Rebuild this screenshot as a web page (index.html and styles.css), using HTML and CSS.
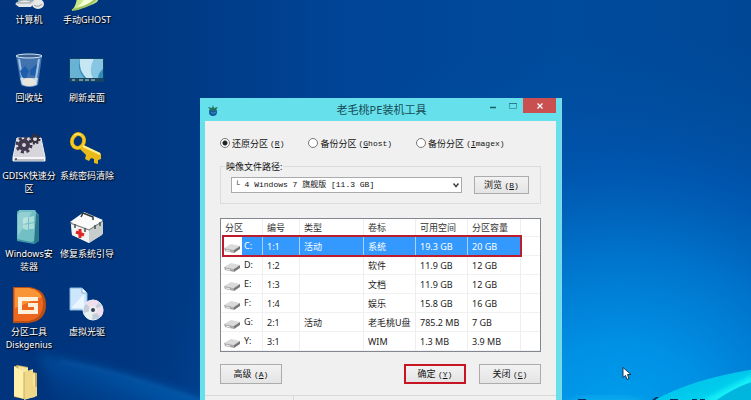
FILE: index.html
```html
<!DOCTYPE html>
<html lang="zh-CN">
<head>
<meta charset="utf-8">
<meta name="viewport" content="width=device-width, initial-scale=1">
<title>老毛桃PE装机工具</title>
<link rel="stylesheet" href="styles.css">
</head>
<body>
<main class="desktop">
  <svg class="wallpaper" viewBox="0 0 751 400" preserveAspectRatio="none" aria-hidden="true">
    <defs>
      <linearGradient id="sky" x1="0" y1="0" x2="1" y2="0">
        <stop offset="0" stop-color="#00347c"/><stop offset=".17" stop-color="#00367f"/><stop offset=".45" stop-color="#004496"/><stop offset=".75" stop-color="#004b9d"/><stop offset="1" stop-color="#004896"/>
      </linearGradient>
      <radialGradient id="glow" gradientUnits="userSpaceOnUse" cx="0" cy="0" r="1" gradientTransform="translate(620 420) scale(460 390)">
        <stop offset="0" stop-color="#00a0ee"/><stop offset=".2" stop-color="#0090e4"/><stop offset=".42" stop-color="#0074cc"/><stop offset=".65" stop-color="#0058b2" stop-opacity=".8"/><stop offset="1" stop-color="#004c9e" stop-opacity="0"/>
      </radialGradient>
      <linearGradient id="beam" gradientUnits="userSpaceOnUse" x1="120" y1="372" x2="100" y2="418">
        <stop offset="0" stop-color="#0868be" stop-opacity=".6"/><stop offset="1" stop-color="#0050a4" stop-opacity=".1"/>
      </linearGradient>
      <linearGradient id="wave" x1="0" y1="0" x2="1" y2="1">
        <stop offset="0" stop-color="#10b8ea"/><stop offset=".5" stop-color="#00c8ec"/><stop offset="1" stop-color="#00dcf0"/>
      </linearGradient>
      <filter id="soft"><feGaussianBlur stdDeviation="2"/></filter>
      <filter id="haze"><feGaussianBlur stdDeviation="5"/></filter>
    </defs>
    <rect width="751" height="400" fill="url(#sky)"/>
    <rect width="751" height="400" fill="url(#glow)"/>
    <path d="M38 354Q120 368 210 402V420H60Q50 380 38 354Z" fill="url(#beam)" filter="url(#haze)"/>
    <path d="M60 361Q125 374 202 401" stroke="#2786d2" stroke-width="1" fill="none" opacity=".6" filter="url(#soft)"/>
    <ellipse cx="605" cy="405" rx="40" ry="8" fill="#14b6ee" opacity=".7" filter="url(#haze)"/>
    <path d="M651 402Q690 379 755 369V402Z" fill="url(#wave)"/>
    <path d="M700 402Q720 391 755 374V384Q730 394 716 402Z" fill="#13eef8" filter="url(#soft)"/>
    <path d="M714 402Q733 388 755 381V402Z" fill="#00b6df"/>
    <path d="M578 400v-1h8v1zM652 400l4-3h3l-4 3zM670 400v-1h8v1zM692 400v-1h5v1zM700 400v-1h5v1z" fill="#08305e"/>
  </svg>

  <ul class="shortcuts">
    <li><svg viewBox="0 0 36 36" aria-hidden="true"><path d="M7 7h20v19H7z" fill="#8aa"/><ellipse cx="15" cy="28" rx="10" ry="3" fill="#aab4bb"/><path d="M4 29q11-7 18 0l-2 3H8z" fill="#e3e6e8"/><path d="M6 28h14" stroke="#999"/><ellipse cx="27" cy="29" rx="6" ry="5" fill="#e8e8e8"/><path d="M23 30q4 3 8-1" stroke="#999" fill="none"/></svg><span>计算机</span></li>
    <li><svg viewBox="0 0 36 36" aria-hidden="true"><path d="M3 35Q9 29 8 15L26 8Q34 18 28 27 21 32 3 35Z" fill="#c9e788"/><path d="M8 32Q19 24 19 10l8 3q2 12-6 16z" fill="#f5ffd8"/><path d="M3 35q15-2 24-11" stroke="#9bc25c" stroke-width="2" fill="none"/></svg><span>手动GHOST</span></li>
    <li><svg viewBox="0 0 36 36" aria-hidden="true"><path d="M5 3h26l-4 29q-9 4-17 0z" fill="#5c8fc4" opacity=".7"/><path d="M9 25h18l-1 7q-7 3-15 0z" fill="#bccbd6"/><path d="M12 27q6-4 12 0l1 4q-7 4-13 0z" fill="#e8e5dd"/><path d="M8 6l4 25M28 6l-4 25" stroke="#d7edff" stroke-width="2" opacity=".65"/><path d="M9 18l5-5 4 5-3 7-4-1zM19 17l7-6-2 12-5-1z" fill="#1e5dac"/><ellipse cx="18" cy="3" rx="13" ry="2" fill="#385f90" stroke="#d6e7f3"/></svg><span>回收站</span></li>
    <li><svg viewBox="0 0 36 36" aria-hidden="true"><path d="M0 5h35v24H0z" fill="#124164"/><path d="M1 6h33v20H1z" fill="#328bbd"/><path d="M1 6h10q-4 10 5 20H1z" fill="#68b2d4"/><path d="M11 6h14Q20 17 28 26h-10Q9 17 11 6Z" fill="#c6e6f4"/><path d="M25 6h9v10q-5 4-5 10h-5q-5-10 1-20Z" fill="#86c6e3"/><path d="M1 25h33v3H1z" fill="#18465e"/><path d="M3 27h3M10 27h4M16 27h4M22 27h4" stroke="#bddde9"/></svg><span>刷新桌面</span></li>
    <li><svg viewBox="0 0 36 36" aria-hidden="true"><path d="M6 7h24l4 19v4H2v-4z" fill="#d7d5dc" stroke="#eee"/><path d="M2 26h32v4H2z" fill="#f6f6f7"/><path d="M3 29h30" stroke="#888795"/><circle cx="5" cy="28" r="1" fill="#444"/><circle cx="13" cy="14" r="4" fill="none" stroke="#42394f" stroke-width="4"/><circle cx="13" cy="14" r="7" fill="none" stroke="#42394f" stroke-width="3" stroke-dasharray="3 2.500"/><circle cx="24" cy="8" r="3" fill="none" stroke="#34303c" stroke-width="2"/><circle cx="24" cy="8" r="4.500" fill="none" stroke="#34303c" stroke-width="2" stroke-dasharray="2 1.500"/></svg><span>GDISK快速分区</span></li>
    <li><svg viewBox="0 0 36 36" aria-hidden="true"><ellipse cx="9" cy="10" rx="6" ry="7" transform="rotate(18 9 10)" fill="none" stroke="#b98300" stroke-width="4"/><ellipse cx="9" cy="10" rx="6" ry="7" transform="rotate(18 9 10)" fill="none" stroke="#f2cb29" stroke-width="3"/><path d="M14 14l18 9v5l-3 1v4l-4-1v-4l-3-1-2 3-4-2 1-4-6-6z" fill="#e9b91a"/><path d="M14 15l17 8" stroke="#fff18a" stroke-width="2"/><path d="M5 4q3-3 7 0" stroke="#fff69b" fill="none" stroke-width="1"/></svg><span>系统密码清除</span></li>
    <li><svg viewBox="0 0 36 36" aria-hidden="true"><path d="M6 2h18l4 4v26l-5 3L6 32z" fill="#3c98a5"/><path d="M8 1h16l2 4v26l-6 2L6 30V5z" fill="#72c0c5"/><path d="M9 3h12L7 27V6z" fill="#b4dfdd" opacity=".5"/><path d="M25 4l3 3v25l-5 2z" fill="#287887"/><path d="M12 9l5-1v6l-5 1zM18 8l5-1v6l-5 1zM12 16l5-1v6l-5-1zM18 15l5-1v6h-5z" fill="#d5f1e9" opacity=".6"/></svg><span>Windows安装器</span></li>
    <li><svg viewBox="0 0 36 36" aria-hidden="true"><path d="M2 14l31-3v15L20 34 3 26z" fill="#d7dbd9"/><path d="M1 13L15 3l19 8-14 9z" fill="#fafafa"/><path d="M2 15l18 6v13L3 26z" fill="#f2f3f2"/><path d="M20 21l14-9v13l-14 9z" fill="#c7cecc"/><path d="M1 14l19 7 14-9" stroke="#747b7a" fill="none"/><path d="M12 8l2-4 10 4v3" stroke="#303333" stroke-width="1.500" fill="none"/><path d="M6 15v4M16 19v4M26 16v4M31 13v4" stroke="#49504e" stroke-width="1.500"/><path d="M11 20v9M7 23l8 3" stroke="#df2522" stroke-width="3"/></svg><span>修复系统引导</span></li>
    <li><svg viewBox="0 0 36 36" aria-hidden="true"><path d="M2 0h16q17 2 17 18T17 36H2z" fill="#bd4f15"/><path d="M3 1h15q15 3 14 17T17 34H3z" fill="#ed681e"/><path d="M4 1h14q10 2 13 9L4 21z" fill="#ffad43" opacity=".65"/><path d="M27 12H9v13h16v-7h-8" fill="none" stroke="#fff1dc" stroke-width="4"/></svg><span>分区工具<br>Diskgenius</span></li>
    <li><svg viewBox="0 0 36 36" aria-hidden="true"><path d="M1 1h12l5 5v17H1z" fill="#cee6fb" stroke="#87b6df"/><path d="M13 1v5h5" fill="#fff" stroke="#82add3"/><path d="M3 20L15 7v14H3z" fill="#e9f5ff"/><circle cx="24" cy="23" r="10" fill="#c7ccda" stroke="#edf1f7"/><path d="M24 23l-8-7q8-6 14-1zM24 23l8 7q4-5 1-11z" fill="#efdfee"/><path d="M24 23l-9 3q2 7 8 7z" fill="#e5f4f3"/><circle cx="24" cy="23" r="3" fill="#33415c" stroke="#eee" stroke-width="2"/></svg><span>虚拟光驱</span></li>
    <li><svg viewBox="0 0 36 36" role="img" aria-label="文件夹"><path d="M3 2l3-2 11 2v4l9 2v22l-12 4-11-2z" fill="#c9ab5c"/><path d="M7 1l10 2v7l7-2v24l-10 2z" fill="#f5e7a2"/><path d="M3 1l10 6v27L3 31z" fill="#fff0aa"/><path d="M13 7l9-3v17l4 1v9l-13 4z" fill="#efd989"/><path d="M13 7v27" stroke="#c7ad60"/></svg></li>
  </ul>

  <section class="window" aria-labelledby="window-title">
    <header class="titlebar">
      <svg class="app-icon" viewBox="0 0 12 12" aria-hidden="true"><circle cx="6" cy="8" r="4" fill="#135a9d"/><path d="M1 3l4 1 1-3 1 3 4-1-3 4H4z" fill="#25735f"/><path d="M4 8q2 3 5 0" stroke="#3d9ac3" fill="none"/></svg>
      <h1 id="window-title">老毛桃PE装机工具</h1>
      <div class="caption-buttons">
        <button type="button" class="caption" aria-label="最小化"><svg viewBox="0 0 10 10"><path d="M2 6.500h6" stroke="#17616b" stroke-width="1.500"/></svg></button>
        <button type="button" class="caption" aria-label="最大化"><svg viewBox="0 0 10 10"><path d="M1.500 2.500h7v5h-7z" fill="none" stroke="#40a1ad"/><path d="M1 2.500h8" stroke="#287f8b"/></svg></button>
        <button type="button" class="caption caption-close" aria-label="关闭窗口"><svg viewBox="0 0 10 10"><path d="M2.500 2.500l5 5m0-5l-5 5" stroke="#fff" stroke-width="1.300"/></svg></button>
      </div>
    </header>
    <form class="client">
      <div class="modes">
        <label><input type="radio" name="mode" checked>还原分区 <span class="latin">(<u>R</u>)</span></label>
        <label><input type="radio" name="mode">备份分区 <span class="latin">(<u>G</u>host)</span></label>
        <label><input type="radio" name="mode">备份分区 <span class="latin">(<u>I</u>magex)</span></label>
      </div>
      <fieldset class="image-path">
        <legend><label for="image">映像文件路径:</label></legend>
        <div class="path-row">
          <div class="combo">
            <select id="image"><option>└ 4 Windows 7 旗舰版 [11.3 GB]</option></select>
            <svg viewBox="0 0 8 8" aria-hidden="true"><path d="M1.500 2.500L4 5.500l2.500-3" fill="none" stroke="#444" stroke-width="1.500"/></svg>
          </div>
          <button type="button" class="button browse">浏览 <span class="latin">(<u>B</u>)</span></button>
        </div>
      </fieldset>
      <div class="list">
        <table>
          <colgroup><col class="c-drive"><col class="c-number"><col class="c-type"><col class="c-label"><col class="c-free"><col class="c-size"><col></colgroup>
          <thead><tr><th>分区</th><th>编号</th><th>类型</th><th>卷标</th><th>可用空间</th><th>分区容量</th><th></th></tr></thead>
          <tbody>
            <tr class="selected"><td><div class="drive"><svg class="disk" viewBox="0 0 16 10"><use href="#disk"/></svg>C:</div></td><td>1:1</td><td>活动</td><td>系统</td><td>19.3 GB</td><td>20 GB</td><td></td></tr>
            <tr><td><div class="drive"><svg class="disk" viewBox="0 0 16 10"><use href="#disk"/></svg>D:</div></td><td>1:2</td><td></td><td>软件</td><td>11.9 GB</td><td>12 GB</td><td></td></tr>
            <tr><td><div class="drive"><svg class="disk" viewBox="0 0 16 10"><use href="#disk"/></svg>E:</div></td><td>1:3</td><td></td><td>文档</td><td>11.9 GB</td><td>12 GB</td><td></td></tr>
            <tr><td><div class="drive"><svg class="disk" viewBox="0 0 16 10"><use href="#disk"/></svg>F:</div></td><td>1:4</td><td></td><td>娱乐</td><td>15.8 GB</td><td>16 GB</td><td></td></tr>
            <tr><td><div class="drive"><svg class="disk" viewBox="0 0 16 10"><use href="#disk"/></svg>G:</div></td><td>2:1</td><td>活动</td><td>老毛桃U盘</td><td>785.2 MB</td><td>7 GB</td><td></td></tr>
            <tr><td><div class="drive"><svg class="disk" viewBox="0 0 16 10"><use href="#disk"/></svg>Y:</div></td><td>3:1</td><td></td><td>WIM</td><td>1.3 MB</td><td>3.9 MB</td><td></td></tr>
          </tbody>
        </table>
        <div class="row-marker"></div>
      </div>
      <div class="actions">
        <button type="button" class="button advanced">高级 <span class="latin">(<u>A</u>)</span></button>
        <button type="button" class="button confirm">确定 <span class="latin">(<u>Y</u>)</span></button>
        <button type="button" class="button">关闭 <span class="latin">(<u>C</u>)</span></button>
      </div>
      <footer class="statusbar"><span></span><span></span></footer>
    </form>
  </section>

  <svg class="pointer" viewBox="0 0 10 14" aria-hidden="true"><path d="M1 1v10l2.500-2 1.500 4 2-1-1.500-4H9z" fill="#fff" stroke="#10243c" stroke-width=".9"/></svg>
</main>
<svg class="symbols" aria-hidden="true">
  <symbol id="disk" viewBox="0 0 16 10">
    <path class="disk-top" d="M0 5L7 1l9 2-6 4z"/><path class="disk-front" d="M0 5l10 2v3L1 8z"/><path class="disk-side" d="M10 7l6-4v3l-6 4z"/><path d="M2 7l4 1" stroke="#fff" stroke-width=".8"/>
  </symbol>
</svg>
</body>
</html>
```
FILE: styles.css
```css
* { box-sizing: border-box; }

body {
  margin: 0;
  overflow: hidden;
  background: #003a84;
  color: #222;
  font: 9px/13px "Noto Sans", "Noto Sans CJK SC", sans-serif;
}

button, select { font: inherit; color: inherit; }
u { text-underline-offset: 1px; }

.desktop {
  position: relative;
  height: 100vh;
  overflow: hidden;
}

.wallpaper {
  position: absolute;
  inset: 0;
  width: 100%;
  height: 100%;
}

/* Desktop shortcuts */
.shortcuts {
  position: absolute;
  top: -25px;
  left: 0;
  display: grid;
  grid-template-columns: 58px 58px;
  grid-auto-rows: 78px;
  margin: 0;
  padding: 0;
  list-style: none;
  color: #fff;
  text-align: center;
  text-shadow: 1px 1px 1px #000, 0 0 2px #001638;
}
.shortcuts li {
  display: flex;
  flex-direction: column;
  align-items: center;
  gap: 2px;
}
.shortcuts svg { width: 36px; height: 36px; flex: none; }
.shortcuts span { max-width: 56px; word-break: break-all; }

/* Window frame */
.window {
  position: absolute;
  top: 98px;
  left: 200px;
  width: 362px;
  padding: 0 5px 5px;
  background: #66e1ec;
  border-right: 1px solid #8cd5e4;
}
.titlebar {
  display: grid;
  grid-template-columns: 1fr auto 1fr;
  align-items: center;
  height: 23px;
  padding-left: 2px;
}
.titlebar h1 {
  margin: 0;
  color: #174b55;
  font-size: 11px;
  font-weight: 400;
  line-height: 20px;
}
.app-icon { width: 12px; height: 12px; }
.caption-buttons {
  display: flex;
  align-self: start;
  justify-content: flex-end;
}
.caption {
  width: 20px;
  height: 15px;
  padding: 0;
  border: 0;
  background: none;
  display: flex;
  align-items: center;
  justify-content: center;
}
.caption svg { width: 10px; height: 10px; }
.caption-close { width: 33px; background: #c94f50; }

.client {
  display: flex;
  flex-direction: column;
  padding: 15px 15px 0;
  background: #f0f0f0;
}

/* Restore and backup modes */
.modes { display: flex; gap: 24px; height: 14px; }
.modes label { display: flex; align-items: center; gap: 2px; color: #111; }
.modes input {
  appearance: none;
  width: 10px;
  height: 10px;
  margin: 0;
  border: 1px solid #777;
  border-radius: 50%;
  background: #fff;
}
.modes input:checked { background: radial-gradient(circle, #222 0 2px, #fff 3px); }
.latin { font-family: "Liberation Mono", monospace; font-size: 8px; }

/* Image path */
.image-path {
  min-width: 0;
  margin: 10px 0 0;
  padding: 3px 11px 9px 10px;
  border: 1px solid #dcdcdc;
}
.image-path legend { margin-left: -6px; padding: 0 1px; color: #111; }
.path-row { display: flex; align-items: center; gap: 12px; }
.combo { position: relative; flex: 1; display: flex; }
.combo select {
  appearance: none;
  width: 100%;
  height: 16px;
  padding: 0 14px 0 3px;
  border: 1px solid #aaa;
  border-radius: 0;
  background: #fff;
  color: #111;
  font: 8px/14px "Liberation Mono", "Noto Sans CJK SC", monospace;
}
.combo svg {
  position: absolute;
  top: 4px;
  right: 2px;
  width: 8px;
  height: 8px;
  pointer-events: none;
}

.button {
  width: 62px;
  height: 20px;
  padding: 0;
  border: 1px solid #acacac;
  border-radius: 0;
  background: linear-gradient(#f2f2f2, #e4e4e4);
  color: #111;
  line-height: 16px;
}
.browse { width: 55px; height: 18px; }

/* Partition list */
.list {
  position: relative;
  margin-top: 14px;
  border: 1px solid #828790;
  background: #fff;
}
table { width: 100%; table-layout: fixed; border-collapse: separate; border-spacing: 0; }
.c-drive { width: 42px; }
.c-number { width: 37px; }
.c-type { width: 64px; }
.c-label { width: 52px; }
.c-free { width: 52px; }
.c-size { width: 53px; }
th, td {
  height: 19px;
  padding: 0 0 0 4px;
  border-right: 1px solid #eee;
  border-bottom: 1px solid #f1f1f1;
  font-weight: 400;
  text-align: left;
  white-space: nowrap;
}
th { height: 18px; color: #333; }
th:last-child, td:last-child { border-right: 0; }
td:first-child { padding-left: 3px; }
.drive { display: flex; gap: 4px; }
.disk { width: 16px; height: 10px; margin-top: 4px; }
.disk-top { fill: #dadada; }
.disk-front { fill: #aaa; }
.disk-side { fill: #777; }
.selected td { background: #3399ff; color: #fff; border-right-color: #a8d2fc; }
.selected td:first-child { background: linear-gradient(90deg, #fff 21px, #3399ff 21px); }
.selected td:last-child { background: #fff; }
.selected .disk-top { fill: #79b6ec; }
.selected .disk-front { fill: #4c88c2; }
.selected .disk-side { fill: #315f92; }
.row-marker {
  position: absolute;
  top: 16px;
  left: 1px;
  right: 18px;
  height: 22px;
  border: 2px solid #bc1c2b;
}

.actions { display: flex; gap: 13px; margin-top: 12px; }
.advanced { margin-right: auto; }
.confirm { border: 2px solid #c71523; }

.statusbar {
  display: flex;
  height: 20px;
  margin: 11px -15px 0;
  border-top: 1px solid #d9d9d9;
}
.statusbar span:first-child { width: 89px; border-right: 1px solid #d9d9d9; }

.pointer {
  position: absolute;
  top: 366px;
  left: 622px;
  width: 10px;
  height: 15px;
}
.symbols { position: absolute; width: 0; height: 0; }
```
